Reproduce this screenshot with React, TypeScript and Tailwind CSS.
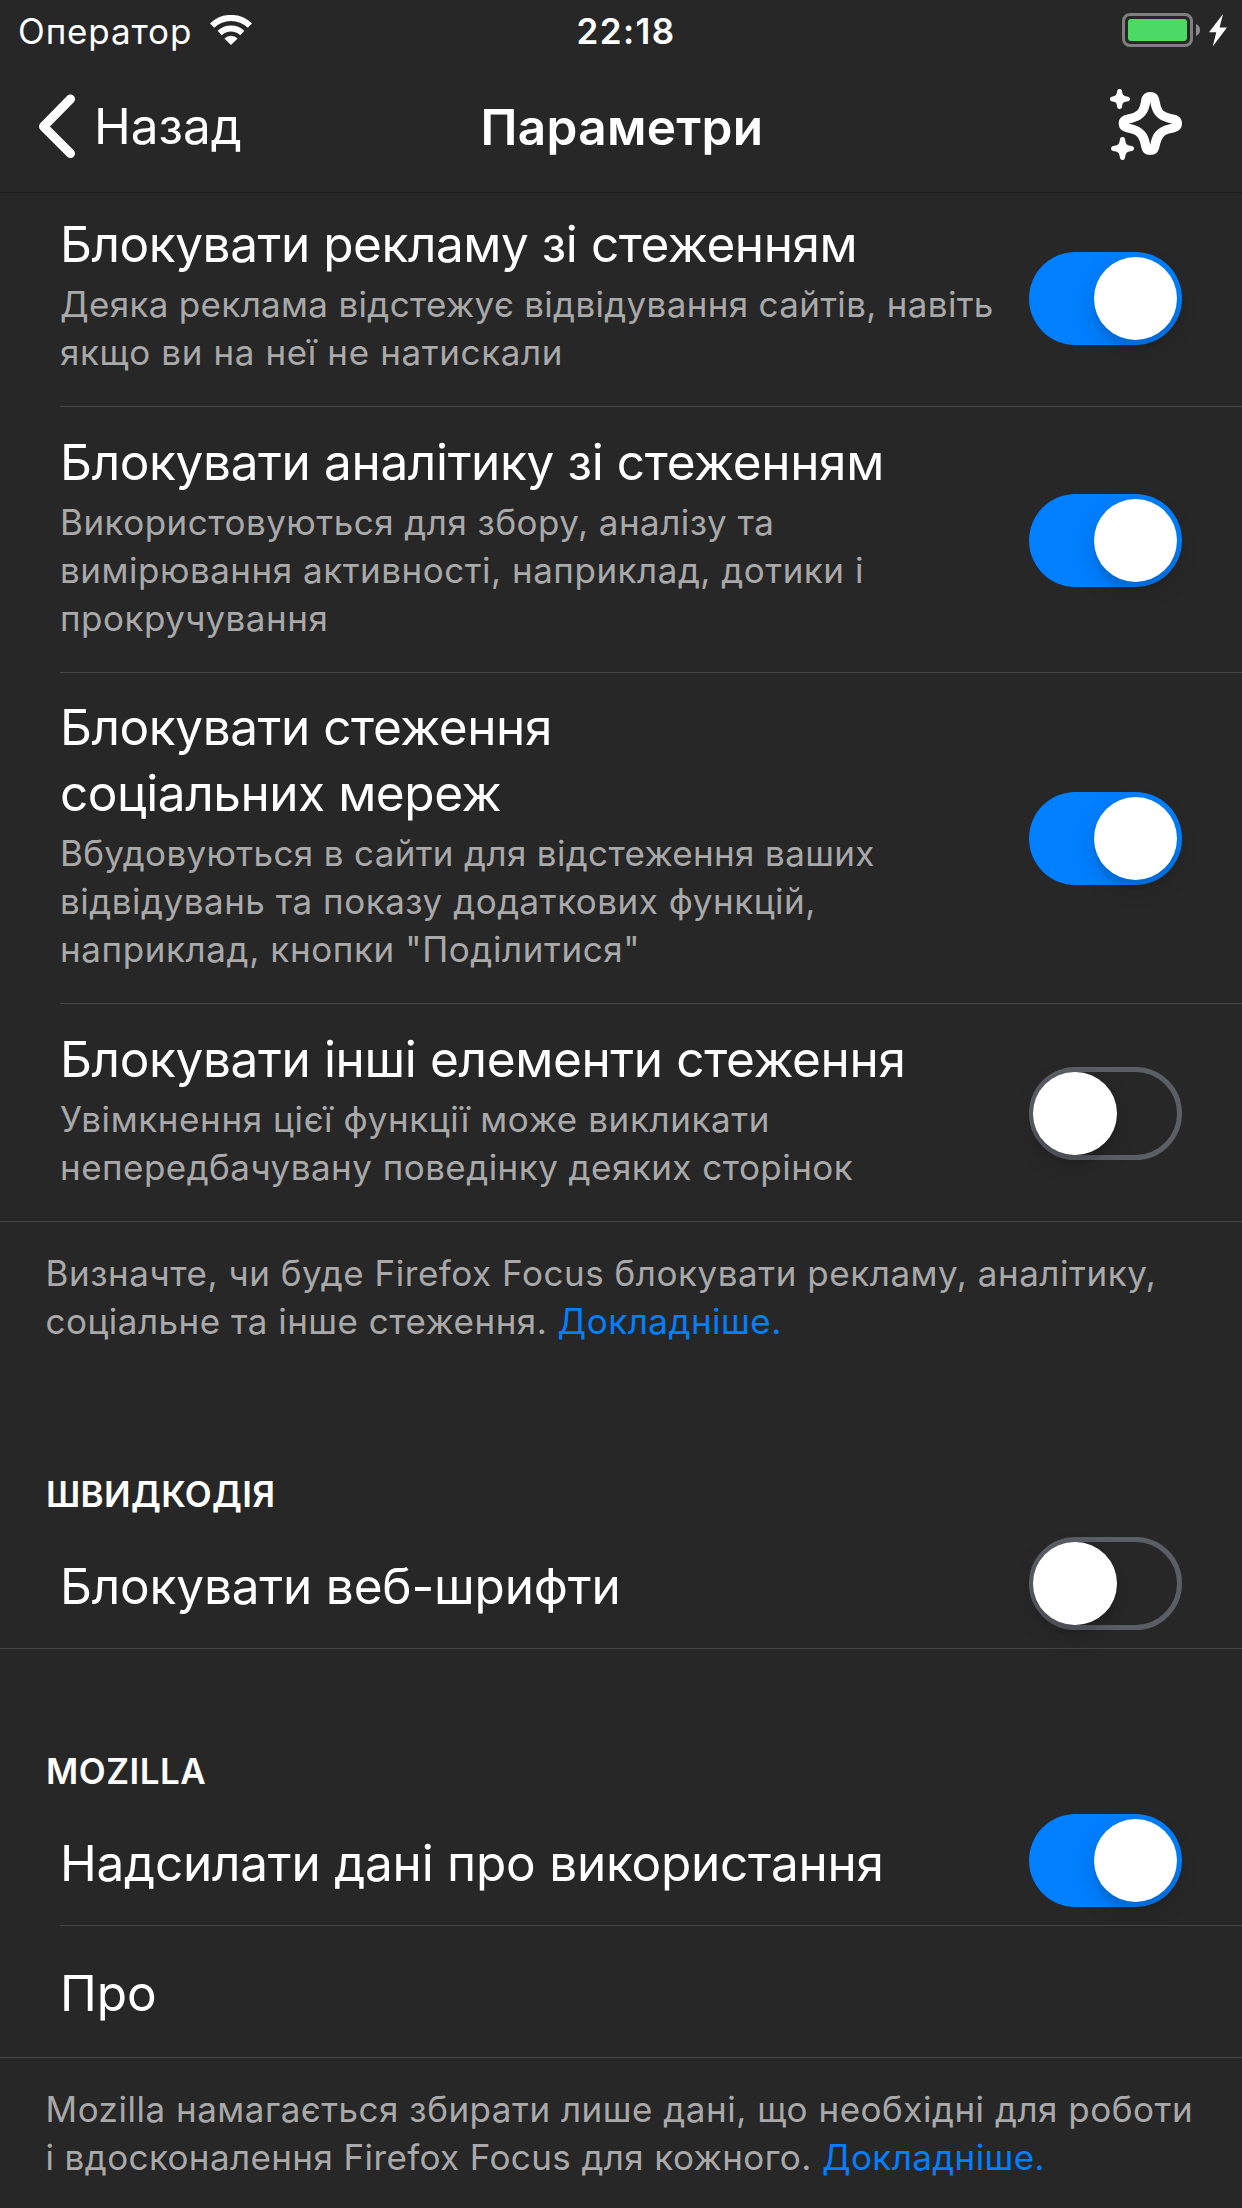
import React from "react";

function Toggle({ on }: { on: boolean }) {
  return (
    <button
      role="switch"
      aria-checked={on}
      className={
        "mr-[60px] flex h-[93px] w-[153px] shrink-0 items-center rounded-full " +
        (on
          ? "justify-end bg-[#007fff] pr-[5px]"
          : "justify-start border-[5px] border-[#5a5e65]")
      }
    >
      <span
        className={
          "h-[83.5px] w-[83.5px] shrink-0 rounded-full bg-white shadow-[0_9px_24px_rgba(0,0,0,0.15),0_9px_3px_rgba(0,0,0,0.06)] " +
          (on ? "" : "-ml-[0.7px]")
        }
      />
    </button>
  );
}

type RowProps = {
  title: string[];
  titleClass: string;
  lines: { text: string; cls: string }[];
  on: boolean;
  full?: boolean;
  padding: string;
  toggleClass: string;
};

function DetailRow({ title, titleClass, lines, on, full, padding, toggleClass }: RowProps) {
  return (
    <div className="relative flex pl-[60px]">
      <div className={"min-w-0 flex-1 whitespace-nowrap " + padding}>
        <div className={"text-[49.5px] leading-[66px] text-white " + titleClass}>
          {title.map((t) => (
            <div key={t}>{t}</div>
          ))}
        </div>
        <div className="mt-[3px] text-[35px] leading-[48px] text-[#a9a9a9]">
          {lines.map((l) => (
            <div key={l.text} className={l.cls}>
              {l.text}
            </div>
          ))}
        </div>
      </div>
      <div className={"flex items-center " + toggleClass}>
        <Toggle on={on} />
      </div>
      <div className={"absolute right-0 -bottom-px h-px bg-[#444444] " + (full ? "left-0" : "left-[60px]")} />
    </div>
  );
}

function Footnote({ className, children }: { className: string; children: React.ReactNode }) {
  return (
    <div className={"pl-[45.5px] text-[35px] leading-[48px] whitespace-nowrap text-[#a9a9a9] " + className}>
      {children}
    </div>
  );
}

function WifiIcon() {
  return (
    <svg className="ml-[18px] h-[30px] w-[42px]" viewBox="0 0 42 30">
      <g fill="none" stroke="#fff" strokeWidth="6">
        <path d="M2.1 10.6A27 27 0 0 1 39.9 10.6" />
        <path d="M9.7 18A16.3 16.3 0 0 1 32.3 18" />
      </g>
      <path d="M21 30L14.4 23.4A9.6 9.6 0 0 1 27.6 23.4Z" fill="#fff" />
    </svg>
  );
}

function BatteryIcon() {
  return (
    <svg className="h-[34px] w-[106px]" viewBox="0 0 106 34">
      <rect x="1.5" y="1.5" width="68" height="31" rx="6.5" fill="none" stroke="#7f7f7f" strokeWidth="3" />
      <rect x="6" y="6" width="59" height="22" rx="3" fill="#4cd964" />
      <path d="M74 11Q78 12.5 78 17T74 23Z" fill="#8c8c8c" />
      <path d="M101 1L87 19.3H94.3L90.7 33.5L105 14.6H97.6Z" fill="#fff" />
    </svg>
  );
}

function SparkleIcon() {
  return (
    <svg className="h-[74px] w-[74px]" viewBox="0 0 74 74">
      <path
        fillRule="evenodd"
        d="M42.3 3C47.5 3 50.6 6 51.4 11C52.6 18 54.2 21.2 56.6 22.6C58.8 24 62 25 65.5 25.6C70.8 26.5 74 29.6 74 34.5C74 39.5 70.8 42.6 65.5 43.4C60 44.4 57.6 45.4 55.8 47.4C53.6 49.6 52.6 53 51.4 58C50.5 63 47.5 66 42.3 66C37.1 66 34.1 63 33.2 58C32.2 52.5 31 49.4 29 47.4C26.8 45.2 24 44.4 19.5 43.4C14 42.6 10.7 39.5 10.7 34.5C10.7 29.6 14 26.5 19.5 25.6C24 24.8 27 23.6 29.2 21.6C31.2 19.6 32.4 16 33.2 11C34.1 6 37.1 3 42.3 3ZM42.3 13C40.6 24 36.6 31.5 20.5 34.5C36.6 38 40.4 45 42.3 56C44.2 45 48 38 64.5 34.5C48 31.5 44 24 42.3 13Z"
        fill="#fff"
      />
      <path
        d="M11.6 0C13.4 0 13.9 1 14.1 2.8C14.6 6 15.6 7 18.9 7.4C20.8 7.7 21.9 8.2 21.9 10C21.9 11.8 20.8 12.3 18.9 12.6C15.6 13 14.6 14 14.1 17.2C13.9 19 13.4 20 11.6 20C9.8 20 9.3 19 9.1 17.2C8.6 14 7.6 13 4.7 12.6C2.9 12.3 2 11.8 2 10C2 8.2 2.9 7.7 4.7 7.4C7.6 7 8.6 6 9.1 2.8C9.3 1 9.8 0 11.6 0Z"
        fill="#fff"
      />
      <path
        d="M14.5 48C16.4 48 17 49.2 17.2 51.2C17.7 54.9 19 56.2 22.4 56.7C24.6 57 26 57.6 26 59.5C26 61.4 24.6 62 22.4 62.3C19 62.8 17.7 64.1 17.2 67.8C17 69.8 16.4 71 14.5 71C12.6 71 12 69.8 11.8 67.8C11.3 64.1 10 62.8 6.6 62.3C4.5 62 3 61.4 3 59.5C3 57.6 4.5 57 6.6 56.7C10 56.2 11.3 54.9 11.8 51.2C12 49.2 12.6 48 14.5 48Z"
        fill="#fff"
      />
    </svg>
  );
}

export default function App() {
  return (
    <div className="h-[2208px] w-[1242px] overflow-hidden bg-[#272727] font-['Inter','Liberation_Sans',sans-serif] text-white">
      <header className="flex h-[193px] flex-col border-b border-[#1c1c1c]">
        <div className="grid h-[60px] grid-cols-[1fr_auto_1fr] items-center">
          <div className="flex items-center pl-[18px] text-[35px] tracking-[0.87px]">
            <span className="pt-0.5 leading-[58px]">Оператор</span>
            <WifiIcon />
          </div>
          <div className="pt-0.5 pl-[10px] text-[35px] leading-[58px] font-semibold tracking-[1.4px]">22:18</div>
          <div className="flex justify-end pr-[14px]">
            <BatteryIcon />
          </div>
        </div>
        <div className="grid h-[132px] grid-cols-[1fr_auto_1fr] items-center">
          <div className="flex items-center pl-[38px] text-[49.5px]">
            <svg className="h-[64px] w-[38px]" viewBox="0 0 38 64">
              <path
                d="M32.5 5L5.5 32.5L32.5 59.5"
                fill="none"
                stroke="#fff"
                strokeWidth="9"
                strokeLinecap="round"
                strokeLinejoin="round"
              />
            </svg>
            <span className="ml-[18px] leading-[132px]">Назад</span>
          </div>
          <div className="pt-0.5 pl-[2px] text-[49.5px] leading-[130px] font-semibold tracking-[0.3px]">Параметри</div>
          <div className="flex justify-end pr-[60px]">
            <SparkleIcon />
          </div>
        </div>
      </header>

      <section className="flex flex-col gap-px">
        <DetailRow
          on
          padding="pt-[18px] pb-[30px]"
          toggleClass="pb-0.5"
          title={["Блокувати рекламу зі стеженням"]}
          titleClass="tracking-[-0.436px]"
          lines={[
            { text: "Деяка реклама відстежує відвідування сайтів, навіть", cls: "tracking-[0.32px]" },
            { text: "якщо ви на неї не натискали", cls: "tracking-[0.62px]" },
          ]}
        />
        <DetailRow
          on
          padding="pt-[22px] pb-[30px]"
          toggleClass="pt-0.5"
          title={["Блокувати аналітику зі стеженням"]}
          titleClass="tracking-[-0.35px]"
          lines={[
            { text: "Використовуються для збору, аналізу та", cls: "tracking-[0.48px]" },
            { text: "вимірювання активності, наприклад, дотики і", cls: "tracking-[0.51px]" },
            { text: "прокручування", cls: "tracking-[0.5px]" },
          ]}
        />
        <DetailRow
          on
          padding="pt-[21px] pb-[30px]"
          toggleClass="pt-px"
          title={["Блокувати стеження", "соціальних мереж"]}
          titleClass="tracking-[-0.43px]"
          lines={[
            { text: "Вбудовуються в сайти для відстеження ваших", cls: "tracking-[0.34px]" },
            { text: "відвідувань та показу додаткових функцій,", cls: "tracking-[0.51px]" },
            { text: 'наприклад, кнопки "Поділитися"', cls: "tracking-[0.6px]" },
          ]}
        />
        <DetailRow
          full
          on={false}
          padding="pt-[22px] pb-[30px]"
          toggleClass="pt-0.5"
          title={["Блокувати інші елементи стеження"]}
          titleClass="tracking-[-0.36px]"
          lines={[
            { text: "Увімкнення цієї функції може викликати", cls: "tracking-[0.6px]" },
            { text: "непередбачувану поведінку деяких сторінок", cls: "tracking-[0.46px]" },
          ]}
        />
      </section>

      <Footnote className="pt-7">
        <div className="tracking-[0.54px]">Визначте, чи буде Firefox Focus блокувати рекламу, аналітику,</div>
        <div className="tracking-[0.48px]">
          соціальне та інше стеження. <a className="text-[#007fff]">Докладніше.</a>
        </div>
      </Footnote>

      <section className="pt-[125px]">
        <h2 className="h-[46px] pl-[46px] text-[35px] leading-[48px] font-semibold tracking-[0.36px]">ШВИДКОДІЯ</h2>
        <div className="flex h-[133px] items-center justify-between border-b border-[#444444] pl-[60px]">
          <span className="pt-[8px] text-[49.5px] leading-[66px] tracking-[-0.17px]">Блокувати веб-шрифти</span>
          <div className="pt-[3px]">
            <Toggle on={false} />
          </div>
        </div>
      </section>

      <section className="pt-[98px]">
        <h2 className="h-[46px] pl-[46px] text-[35px] leading-[48px] font-semibold tracking-[0.5px]">MOZILLA</h2>
        <div className="flex h-[132px] items-center justify-between pl-[60px]">
          <span className="pt-[8px] text-[49.5px] leading-[66px] tracking-[-0.23px]">
            Надсилати дані про використання
          </span>
          <div className="pt-[3px]">
            <Toggle on />
          </div>
        </div>
        <div className="ml-[60px] h-px bg-[#444444]" />
        <div className="flex h-[132px] items-center border-b border-[#444444] pl-[60px]">
          <span className="pt-0.5 text-[49.5px] leading-[66px] tracking-[-0.1px]">Про</span>
        </div>
      </section>

      <Footnote className="pt-[27px]">
        <div className="tracking-[0.51px]">Mozilla намагається збирати лише дані, що необхідні для роботи</div>
        <div className="tracking-[0.39px]">
          і вдосконалення Firefox Focus для кожного. <a className="text-[#007fff]">Докладніше.</a>
        </div>
      </Footnote>
    </div>
  );
}
